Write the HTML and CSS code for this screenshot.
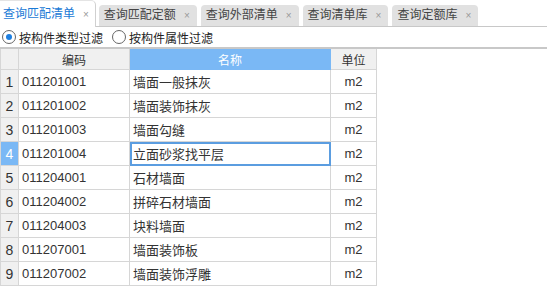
FILE: index.html
```html
<!DOCTYPE html>
<html>
<head>
    <title>查询匹配清单</title>
    <meta charset="utf-8">
    <link rel="stylesheet" href="styles.css">
</head>
<body>
    <nav class="tabs">
        <div class="tab valgt">查询匹配清单<span class="luk">×</span></div>
        <div class="tab">查询匹配定额<span class="luk">×</span></div>
        <div class="tab">查询外部清单<span class="luk">×</span></div>
        <div class="tab">查询清单库<span class="luk">×</span></div>
        <div class="tab">查询定额库<span class="luk">×</span></div>
    </nav>

    <div class="filter">
        <label class="radio"><span class="cirkel on"></span>按构件类型过滤</label>
        <label class="radio"><span class="cirkel"></span>按构件属性过滤</label>
    </div>

    <table class="grid">
        <colgroup>
            <col class="c-nr">
            <col class="c-kode">
            <col class="c-navn">
            <col class="c-enhed">
        </colgroup>
        <thead>
            <tr>
                <th></th>
                <th>编码</th>
                <th class="aktiv">名称</th>
                <th>单位</th>
            </tr>
        </thead>
        <tbody>
            <tr><td class="nr">1</td><td>011201001</td><td>墙面一般抹灰</td><td class="enhed">m2</td></tr>
            <tr><td class="nr">2</td><td>011201002</td><td>墙面装饰抹灰</td><td class="enhed">m2</td></tr>
            <tr><td class="nr">3</td><td>011201003</td><td>墙面勾缝</td><td class="enhed">m2</td></tr>
            <tr class="valgt-raekke"><td class="nr">4</td><td>011201004</td><td class="fokus">立面砂浆找平层</td><td class="enhed">m2</td></tr>
            <tr><td class="nr">5</td><td>011204001</td><td>石材墙面</td><td class="enhed">m2</td></tr>
            <tr><td class="nr">6</td><td>011204002</td><td>拼碎石材墙面</td><td class="enhed">m2</td></tr>
            <tr><td class="nr">7</td><td>011204003</td><td>块料墙面</td><td class="enhed">m2</td></tr>
            <tr><td class="nr">8</td><td>011207001</td><td>墙面装饰板</td><td class="enhed">m2</td></tr>
            <tr><td class="nr">9</td><td>011207002</td><td>墙面装饰浮雕</td><td class="enhed">m2</td></tr>
        </tbody>
    </table>
</body>
</html>
```

FILE: styles.css
```css
body {
    margin: 0;
    background: white;
    font-family: "Liberation Sans", "Noto Sans CJK SC", sans-serif;
    color: #333;
}

.tabs {
    display: flex;
    align-items: flex-end;
    height: 26px;
    border-bottom: 1px solid #c8c8c8;
    gap: 4px;
}

.tab {
    height: 21px;
    line-height: 21px;
    padding: 0 7px 0 5px;
    background: #e1e1e1;
    border-radius: 4px 4px 0 0;
    font-size: 12px;
    color: #444;
    white-space: nowrap;
}

.tab.valgt {
    height: 27px;
    line-height: 27px;
    padding: 0 6px 0 3px;
    margin-right: -1px;
    margin-bottom: -1px;
    background: white;
    color: #1a7ad6;
    border-right: 1px solid #d0d0d0;
    border-top: 1px solid #e4e4e4;
    box-sizing: border-box;
    border-radius: 0 5px 0 0;
}

.luk {
    margin-left: 8px;
    color: #999;
    font-size: 10px;
}

.filter {
    display: flex;
    height: 20px;
    align-items: center;
    gap: 7px;
    border-bottom: 2px solid #c8c8c8;
    font-size: 12px;
    color: #222;
}

.radio {
    display: flex;
    align-items: center;
    gap: 3px;
}

.cirkel {
    width: 12px;
    height: 12px;
    margin-left: 2px;
    border: 1px solid #666;
    border-radius: 50%;
    background: white;
    position: relative;
}

.cirkel.on::after {
    content: "";
    position: absolute;
    left: 3px;
    top: 3px;
    width: 6px;
    height: 6px;
    border-radius: 50%;
    background: #1e7fe0;
}

.grid {
    border-collapse: collapse;
    table-layout: fixed;
    font-size: 13px;
}

.c-nr { width: 18px; }
.c-kode { width: 111px; }
.c-navn { width: 201px; }
.c-enhed { width: 46px; }

.grid th {
    height: 20px;
    padding: 0;
    background: #f0f0f0;
    border: 1px solid #d6d6d6;
    border-top: none;
    font-weight: normal;
    font-size: 12px;
    color: #333;
}

.grid th.aktiv {
    background: #7ab8f5;
    color: white;
    border-color: #7ab8f5;
}

.grid td {
    height: 23px;
    padding: 0 0 0 3px;
    border: 1px solid #d6d6d6;
    white-space: nowrap;
}

.grid td.nr {
    padding: 0;
    text-align: center;
    background: #f0f0f0;
    font-size: 14px;
}

.grid td.enhed {
    padding: 0;
    text-align: center;
}

.valgt-raekke td.nr {
    background: #7ab8f5;
    color: white;
}

.grid td.fokus {
    outline: 2px solid #5b9de0;
    outline-offset: -2px;
}
```
